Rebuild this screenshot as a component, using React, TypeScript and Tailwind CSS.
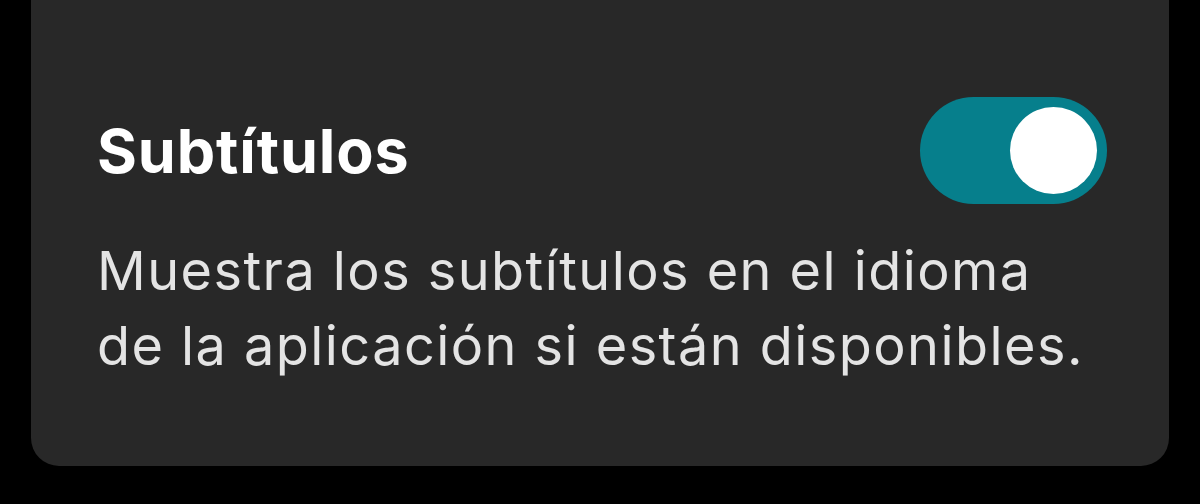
import { useState } from 'react';

export default function App() {
  const [on, setOn] = useState(true);

  return (
    <div className="h-[504px] w-[1200px] bg-black overflow-hidden" style={{ fontFamily: 'Inter, "Noto Sans", sans-serif' }}>
      <div className="ml-[31px] w-[1138px] h-[466px] bg-[#282828] rounded-b-[28px] pl-[66px] pr-[62px] pt-[97px]">
        {/* 标题 + 开关 */}
        <div className="flex items-center justify-between h-[107px]">
          <h2 className="text-[61px] font-bold text-white leading-none tracking-[0.9px] translate-y-[1px]">Subtítulos</h2>
          <button
            type="button"
            onClick={() => setOn(!on)}
            className={`flex items-center w-[187px] h-[107px] rounded-full px-[10px] ${on ? 'bg-[#067f8c] justify-end' : 'bg-[#555] justify-start'}`}
          >
            <span className="block w-[87px] h-[87px] rounded-full bg-white" />
          </button>
        </div>

        {/* 说明 */}
        <p className="mt-[29px] text-[54px] leading-[75px] tracking-[1.45px] text-[#e4e4e4] max-w-[1000px]">
          Muestra los subtítulos en el idioma de la aplicación si están disponibles.
        </p>
      </div>
    </div>
  );
}
